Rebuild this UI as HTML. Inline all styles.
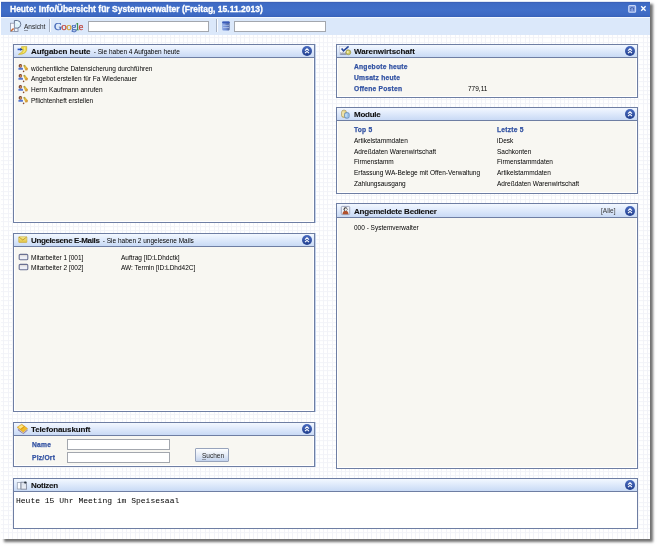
<!DOCTYPE html>
<html><head><meta charset="utf-8">
<style>
*{box-sizing:border-box;margin:0;padding:0}
html,body{width:659px;height:548px;overflow:hidden;background:#fff}
body{position:relative;font-family:"Liberation Sans",sans-serif;color:#000}
.abs{position:absolute}
.t65,.b71,.b77,.b85,.m8{position:absolute;white-space:nowrap;line-height:10px;will-change:transform}
.t65{font:6.5px/10px "Liberation Sans",sans-serif;color:#000}
.b71{font:bold 6.7px/10px "Liberation Sans",sans-serif;color:#3252a2;-webkit-text-stroke:0.25px #3252a2;letter-spacing:0.22px}
.b77{font:bold 8px/10px "Liberation Sans",sans-serif;color:#101010;-webkit-text-stroke:0.1px #101010}
.b77 .sub{margin-left:3.3px;font:normal 6.5px "Liberation Sans",sans-serif;color:#000;-webkit-text-stroke:0}
.b85{font:bold 8.5px/10px "Liberation Sans",sans-serif;color:#fff;-webkit-text-stroke:0.3px #fff}
.m8{font:8px/10px "Liberation Mono",monospace;color:#000}
.panel{position:absolute;border:1px solid #6e7ea3;box-shadow:inset 1px 1px 0 #fff,inset -1px -1px 0 #fff}
.hd{position:absolute;height:12px;background:linear-gradient(to bottom,#f3f8ff 0%,#e2ecfc 40%,#c9daf5 100%)}
.inp{position:absolute;background:#fff;border:1px solid #a3a7ae}
#wrap{position:absolute;left:0;top:0;width:659px;height:548px;filter:blur(0.3px)}
</style></head><body><div id="wrap">

<div class="abs" style="left:1px;top:1px;width:649px;height:538px;box-shadow:3px 3px 2.5px rgba(0,0,0,0.56)"></div>
<div class="abs" style="left:1px;top:1px;width:649px;height:538px;background-color:#fff;background-image:repeating-linear-gradient(to right,transparent 0,transparent 3.38px,#f2f3f8 3.38px,#f2f3f8 4.38px),repeating-linear-gradient(to bottom,transparent 0,transparent 3.38px,#f2f3f8 3.38px,#f2f3f8 4.38px);background-position:-1.04px -1.88px"></div>
<div class="abs" style="left:1px;top:1px;width:649px;height:1px;background:#dfe6f4"></div>
<div class="abs" style="left:1px;top:2px;width:649px;height:15px;background:linear-gradient(to bottom,#3858ac 0,#3e6ac4 1px,#416fc9 8px,#3d69c3 13px,#3760b8 15px)"></div>
<div class="abs" style="left:1px;top:17px;width:649px;height:1px;background:#f4f8fe"></div>
<div class="abs" style="left:1px;top:18px;width:649px;height:17px;background:#dbe8fa"></div>
<div class="b85" style="left:10px;top:4px;">Heute: Info/Übersicht für Systemverwalter (Freitag, 15.11.2013)</div>
<svg class="abs" style="left:626px;top:3px" width="22" height="12" viewBox="626 3 22 12"><rect x="628.7" y="5.5" width="6.9" height="6.7" rx="1" fill="#86a0e2" stroke="#c8d6f6" stroke-width="1.1"/><path d="M630.7 10.6 L630.7 7.7 L633.6 7.7 L633.6 10.6" fill="none" stroke="#1e3c86" stroke-width="0.75" stroke-dasharray="1 0.5"/><path d="M641.2 6.2 L645.6 10.8 M645.6 6.2 L641.2 10.8" stroke="#fff" stroke-width="1.3"/></svg>
<svg class="abs" style="left:9px;top:18px" width="14" height="16" viewBox="9 18 14 16"><rect x="14.4" y="27.6" width="3.6" height="3.8" fill="#eef3fa" stroke="#7a86a0" stroke-width="0.8"/><path d="M14.4 20.5 L17.4 20.5 Q20.9 20.8 20.8 24.3 Q20.7 27.8 17.4 28.1 L14.4 28.1 Z" fill="#def2fb" stroke="#5a6886" stroke-width="0.9"/><path d="M15.6 22 Q18.6 22 19 24" stroke="#ffffff" stroke-width="0.8" fill="none"/><rect x="10.5" y="23.2" width="3.8" height="8.2" fill="#f8f9fc" stroke="#8a93aa" stroke-width="0.8"/><path d="M11 31.1 L13.6 28.4" stroke="#c86830" stroke-width="1.5"/></svg>
<div class="t65" style="left:23.5px;top:22px;color:#222">Ansicht</div>
<div class="abs" style="left:23.5px;top:30px;width:4px;height:1px;background:#9098a8"></div>
<div class="abs" style="left:49px;top:19px;width:1px;height:13px;background:#a8b3c4"></div>
<div class="abs" style="left:50px;top:19px;width:1px;height:13px;background:#fafcff"></div>
<div class="abs" style="left:54px;top:20px;font:11px/12px 'Liberation Serif',serif;letter-spacing:-0.6px;white-space:nowrap;-webkit-text-stroke:0.25px"><span style="color:#3e62b4">G</span><span style="color:#c04a44">o</span><span style="color:#d2a030">o</span><span style="color:#3e62b4">g</span><span style="color:#3a8a48">l</span><span style="color:#c04a44">e</span></div>
<div class="inp" style="left:88px;top:21px;width:121px;height:11px"></div>
<div class="abs" style="left:216px;top:19px;width:1px;height:13px;background:#a8b3c4"></div>
<div class="abs" style="left:217px;top:19px;width:1px;height:13px;background:#fafcff"></div>
<svg class="abs" style="left:221px;top:20px" width="10" height="12" viewBox="221 20 10 12"><defs><linearGradient id="dbg" x1="0" x2="1"><stop offset="0" stop-color="#8aa4e0"/><stop offset="0.5" stop-color="#6e8cd6"/><stop offset="1" stop-color="#4a5e9a"/></linearGradient></defs><rect x="222.2" y="21.4" width="7.4" height="9" rx="0.8" fill="url(#dbg)"/><rect x="222.2" y="21.4" width="7.4" height="1.8" rx="0.6" fill="#3a5ab8"/><path d="M223 25.2 L229 25.2 M223 27.6 L229 27.6" stroke="#c8d6f4" stroke-width="0.7"/><path d="M225.5 24.2 L228.6 24.2" stroke="#4a5a88" stroke-width="0.6"/></svg>
<div class="inp" style="left:234px;top:21px;width:92px;height:11px"></div>
<div class="panel" style="left:13px;top:44px;width:302px;height:179px;background:#f8f7f2"></div>
<div class="hd" style="left:14px;top:45px;width:300px;height:12px"></div>
<div class="abs" style="left:14px;top:57px;width:300px;height:1px;background:#6e7ea3"></div>
<div class="abs" style="left:315px;top:44px;width:1px;height:179px;background:#c4d3ec"></div>
<svg class="abs" style="left:301px;top:45.0px" width="12" height="12" viewBox="0 0 12 12"><defs><linearGradient id="bg4413" x1="0" y1="0" x2="0" y2="1"><stop offset="0" stop-color="#4a6cc0"/><stop offset="1" stop-color="#223f8e"/></linearGradient></defs><circle cx="6" cy="6" r="5" fill="url(#bg4413)"/><path d="M4 5.6 L6 3.8 L8 5.6 M4 8.2 L6 6.4 L8 8.2" stroke="#fff" stroke-width="1.1" fill="none"/></svg>
<div class="b77" style="left:31px;top:47.0px;"><span style="letter-spacing:-0.07px">Aufgaben heute</span><span class="sub">- Sie haben 4 Aufgaben heute</span></div>
<div class="panel" style="left:13px;top:233px;width:302px;height:179px;background:#f8f7f2"></div>
<div class="hd" style="left:14px;top:234px;width:300px;height:12px"></div>
<div class="abs" style="left:14px;top:246px;width:300px;height:1px;background:#6e7ea3"></div>
<div class="abs" style="left:315px;top:233px;width:1px;height:179px;background:#c4d3ec"></div>
<svg class="abs" style="left:301px;top:234.0px" width="12" height="12" viewBox="0 0 12 12"><defs><linearGradient id="bg23313" x1="0" y1="0" x2="0" y2="1"><stop offset="0" stop-color="#4a6cc0"/><stop offset="1" stop-color="#223f8e"/></linearGradient></defs><circle cx="6" cy="6" r="5" fill="url(#bg23313)"/><path d="M4 5.6 L6 3.8 L8 5.6 M4 8.2 L6 6.4 L8 8.2" stroke="#fff" stroke-width="1.1" fill="none"/></svg>
<div class="b77" style="left:31px;top:236.0px;"><span style="letter-spacing:-0.37px">Ungelesene E-Mails</span><span class="sub">- Sie haben 2 ungelesene Mails</span></div>
<div class="panel" style="left:13px;top:422px;width:302px;height:45px;background:#f8f7f2"></div>
<div class="hd" style="left:14px;top:423px;width:300px;height:12px"></div>
<div class="abs" style="left:14px;top:435px;width:300px;height:1px;background:#6e7ea3"></div>
<div class="abs" style="left:315px;top:422px;width:1px;height:45px;background:#c4d3ec"></div>
<svg class="abs" style="left:301px;top:423.0px" width="12" height="12" viewBox="0 0 12 12"><defs><linearGradient id="bg42213" x1="0" y1="0" x2="0" y2="1"><stop offset="0" stop-color="#4a6cc0"/><stop offset="1" stop-color="#223f8e"/></linearGradient></defs><circle cx="6" cy="6" r="5" fill="url(#bg42213)"/><path d="M4 5.6 L6 3.8 L8 5.6 M4 8.2 L6 6.4 L8 8.2" stroke="#fff" stroke-width="1.1" fill="none"/></svg>
<div class="b77" style="left:31px;top:425.0px;"><span style="letter-spacing:-0.12px">Telefonauskunft</span></div>
<div class="panel" style="left:13px;top:478px;width:625px;height:51px;background:#fff"></div>
<div class="hd" style="left:14px;top:479px;width:623px;height:12px"></div>
<div class="abs" style="left:14px;top:491px;width:623px;height:1px;background:#6e7ea3"></div>
<svg class="abs" style="left:624px;top:479.0px" width="12" height="12" viewBox="0 0 12 12"><defs><linearGradient id="bg47813" x1="0" y1="0" x2="0" y2="1"><stop offset="0" stop-color="#4a6cc0"/><stop offset="1" stop-color="#223f8e"/></linearGradient></defs><circle cx="6" cy="6" r="5" fill="url(#bg47813)"/><path d="M4 5.6 L6 3.8 L8 5.6 M4 8.2 L6 6.4 L8 8.2" stroke="#fff" stroke-width="1.1" fill="none"/></svg>
<div class="b77" style="left:31px;top:481.0px;"><span style="letter-spacing:-0.3px">Notizen</span></div>
<div class="panel" style="left:336px;top:44px;width:302px;height:54px;background:#f8f7f2"></div>
<div class="hd" style="left:337px;top:45px;width:300px;height:12px"></div>
<div class="abs" style="left:337px;top:57px;width:300px;height:1px;background:#6e7ea3"></div>
<svg class="abs" style="left:624px;top:45.0px" width="12" height="12" viewBox="0 0 12 12"><defs><linearGradient id="bg44336" x1="0" y1="0" x2="0" y2="1"><stop offset="0" stop-color="#4a6cc0"/><stop offset="1" stop-color="#223f8e"/></linearGradient></defs><circle cx="6" cy="6" r="5" fill="url(#bg44336)"/><path d="M4 5.6 L6 3.8 L8 5.6 M4 8.2 L6 6.4 L8 8.2" stroke="#fff" stroke-width="1.1" fill="none"/></svg>
<div class="b77" style="left:353.5px;top:47.0px;"><span style="letter-spacing:-0.08px">Warenwirtschaft</span></div>
<div class="panel" style="left:336px;top:107px;width:302px;height:87px;background:#f8f7f2"></div>
<div class="hd" style="left:337px;top:108px;width:300px;height:12px"></div>
<div class="abs" style="left:337px;top:120px;width:300px;height:1px;background:#6e7ea3"></div>
<svg class="abs" style="left:624px;top:108.0px" width="12" height="12" viewBox="0 0 12 12"><defs><linearGradient id="bg107336" x1="0" y1="0" x2="0" y2="1"><stop offset="0" stop-color="#4a6cc0"/><stop offset="1" stop-color="#223f8e"/></linearGradient></defs><circle cx="6" cy="6" r="5" fill="url(#bg107336)"/><path d="M4 5.6 L6 3.8 L8 5.6 M4 8.2 L6 6.4 L8 8.2" stroke="#fff" stroke-width="1.1" fill="none"/></svg>
<div class="b77" style="left:353.5px;top:110.0px;"><span style="letter-spacing:-0.25px">Module</span></div>
<div class="panel" style="left:336px;top:203px;width:302px;height:266px;background:#f8f7f2"></div>
<div class="hd" style="left:337px;top:204px;width:300px;height:13px"></div>
<div class="abs" style="left:337px;top:217px;width:300px;height:1px;background:#6e7ea3"></div>
<svg class="abs" style="left:624px;top:204.5px" width="12" height="12" viewBox="0 0 12 12"><defs><linearGradient id="bg203336" x1="0" y1="0" x2="0" y2="1"><stop offset="0" stop-color="#4a6cc0"/><stop offset="1" stop-color="#223f8e"/></linearGradient></defs><circle cx="6" cy="6" r="5" fill="url(#bg203336)"/><path d="M4 5.6 L6 3.8 L8 5.6 M4 8.2 L6 6.4 L8 8.2" stroke="#fff" stroke-width="1.1" fill="none"/></svg>
<div class="b77" style="left:353.5px;top:206.5px;"><span style="letter-spacing:-0.2px">Angemeldete Bediener</span></div>
<div class="t65" style="left:31px;top:64px;">wöchentliche Datensicherung durchführen</div>
<svg class="abs" style="left:18px;top:64px" width="11" height="9" viewBox="0 0 11 9"><defs><linearGradient id="pg{b}" x1="0" y1="0" x2="1" y2="1"><stop offset="0" stop-color="#7a8a48"/><stop offset="0.45" stop-color="#e8c040"/><stop offset="1" stop-color="#c07a30"/></linearGradient></defs><circle cx="2.4" cy="1.9" r="1.8" fill="#6e3c2c"/><circle cx="2.7" cy="2.2" r="1.1" fill="#d08a50"/><rect x="0.4" y="3.8" width="4.6" height="2" rx="0.6" fill="#5676d0"/><path d="M5.2 1.6 L6.8 0.8 L10 4.6 L9.4 6.2 L7.4 6.4 Z" fill="url(#pg{b})"/><circle cx="5.6" cy="7.4" r="0.8" fill="#8a4a2a"/></svg>
<div class="t65" style="left:31px;top:74px;">Angebot erstellen für Fa Wiedenauer</div>
<svg class="abs" style="left:18px;top:74px" width="11" height="9" viewBox="0 0 11 9"><defs><linearGradient id="pg{b}" x1="0" y1="0" x2="1" y2="1"><stop offset="0" stop-color="#7a8a48"/><stop offset="0.45" stop-color="#e8c040"/><stop offset="1" stop-color="#c07a30"/></linearGradient></defs><circle cx="2.4" cy="1.9" r="1.8" fill="#6e3c2c"/><circle cx="2.7" cy="2.2" r="1.1" fill="#d08a50"/><rect x="0.4" y="3.8" width="4.6" height="2" rx="0.6" fill="#5676d0"/><path d="M5.2 1.6 L6.8 0.8 L10 4.6 L9.4 6.2 L7.4 6.4 Z" fill="url(#pg{b})"/><circle cx="5.6" cy="7.4" r="0.8" fill="#8a4a2a"/></svg>
<div class="t65" style="left:31px;top:85px;">Herrn Kaufmann anrufen</div>
<svg class="abs" style="left:18px;top:85px" width="11" height="9" viewBox="0 0 11 9"><defs><linearGradient id="pg{b}" x1="0" y1="0" x2="1" y2="1"><stop offset="0" stop-color="#7a8a48"/><stop offset="0.45" stop-color="#e8c040"/><stop offset="1" stop-color="#c07a30"/></linearGradient></defs><circle cx="2.4" cy="1.9" r="1.8" fill="#6e3c2c"/><circle cx="2.7" cy="2.2" r="1.1" fill="#d08a50"/><rect x="0.4" y="3.8" width="4.6" height="2" rx="0.6" fill="#5676d0"/><path d="M5.2 1.6 L6.8 0.8 L10 4.6 L9.4 6.2 L7.4 6.4 Z" fill="url(#pg{b})"/><circle cx="5.6" cy="7.4" r="0.8" fill="#8a4a2a"/></svg>
<div class="t65" style="left:31px;top:96px;">Pflichtenheft erstellen</div>
<svg class="abs" style="left:18px;top:96px" width="11" height="9" viewBox="0 0 11 9"><defs><linearGradient id="pg{b}" x1="0" y1="0" x2="1" y2="1"><stop offset="0" stop-color="#7a8a48"/><stop offset="0.45" stop-color="#e8c040"/><stop offset="1" stop-color="#c07a30"/></linearGradient></defs><circle cx="2.4" cy="1.9" r="1.8" fill="#6e3c2c"/><circle cx="2.7" cy="2.2" r="1.1" fill="#d08a50"/><rect x="0.4" y="3.8" width="4.6" height="2" rx="0.6" fill="#5676d0"/><path d="M5.2 1.6 L6.8 0.8 L10 4.6 L9.4 6.2 L7.4 6.4 Z" fill="url(#pg{b})"/><circle cx="5.6" cy="7.4" r="0.8" fill="#8a4a2a"/></svg>
<svg class="abs" style="left:16px;top:45px" width="12" height="11" viewBox="16 45 12 11"><path d="M21.5 46.6 L26.8 46.4 Q27.6 51.5 24.5 53.2 Q22 54.6 18.4 54.4 Q22.6 52.2 23.3 49.6 L21.2 49.7 Z" fill="#ecd84a" stroke="#b8a028" stroke-width="0.5"/><path d="M24.5 47.5 Q25.6 50.6 23.5 52.6" stroke="#f8f0a0" stroke-width="0.8" fill="none"/><path d="M17.6 49.4 L20.6 49.4" stroke="#2a58c8" stroke-width="1.6"/><path d="M20.2 48 L22.8 49.4 L20.2 50.8 Z" fill="#1a3c90"/></svg>
<svg class="abs" style="left:17px;top:235px" width="11" height="9" viewBox="17 235 11 9"><defs><linearGradient id="env" x1="0" y1="0" x2="0" y2="1"><stop offset="0" stop-color="#f8ec90"/><stop offset="1" stop-color="#e0c040"/></linearGradient></defs><rect x="18.7" y="236.7" width="8.2" height="5.8" rx="0.6" fill="url(#env)" stroke="#c0a030" stroke-width="0.5"/><path d="M18.9 237 L22.8 240 L26.7 237" stroke="#b08818" stroke-width="0.7" fill="none"/></svg>
<div class="t65" style="left:31px;top:253px;">Mitarbeiter 1 [001]</div>
<div class="t65" style="left:121px;top:253px;">Auftrag [ID:LDhdctk]</div>
<svg class="abs" style="left:18px;top:253px" width="11" height="8" viewBox="0 0 11 8"><rect x="1.2" y="1.4" width="8.6" height="5.4" rx="1.1" fill="#eef0f8" stroke="#6a7092" stroke-width="1.1"/><path d="M2.2 2.8 L8.8 2.8" stroke="#d8cfc0" stroke-width="0.7"/></svg>
<div class="t65" style="left:31px;top:263px;">Mitarbeiter 2 [002]</div>
<div class="t65" style="left:121px;top:263px;">AW: Termin [ID:LDhd42C]</div>
<svg class="abs" style="left:18px;top:263px" width="11" height="8" viewBox="0 0 11 8"><rect x="1.2" y="1.4" width="8.6" height="5.4" rx="1.1" fill="#eef0f8" stroke="#6a7092" stroke-width="1.1"/><path d="M2.2 2.8 L8.8 2.8" stroke="#d8cfc0" stroke-width="0.7"/></svg>
<svg class="abs" style="left:16px;top:423px" width="13" height="12" viewBox="16 423 13 12"><path d="M17.6 428.6 L18.2 430.6 L23.4 434 L27.6 430.6 L27.4 429 Z" fill="#8a7ca8"/><path d="M17.2 427.2 L21.8 424.2 L27.6 428.6 L23.2 432.6 Z" fill="#f0bc28" stroke="#c89020" stroke-width="0.5"/><path d="M18.4 427 L21.6 425 L23.6 426.6 L20.2 428.8 Z" fill="#fae68a"/><path d="M20.6 429.6 L24.6 426.4" stroke="#d88c10" stroke-width="0.9"/><path d="M17.8 428.4 L23.2 432.8 L27.6 429" stroke="#f8f0d8" stroke-width="0.6" fill="none"/></svg>
<div class="b71" style="left:31.5px;top:440px;">Name</div>
<div class="b71" style="left:31.5px;top:453px;">Plz/Ort</div>
<div class="inp" style="left:67px;top:439px;width:103px;height:11px"></div>
<div class="inp" style="left:67px;top:452px;width:103px;height:11px"></div>
<div class="abs" style="left:195px;top:448px;width:34px;height:14px;border:1px solid #98a4bc;border-radius:1px;background:linear-gradient(to bottom,#fdfeff 0%,#e8eef8 45%,#c4d4ee 100%)"></div>
<div class="t65" style="left:201.5px;top:451px;color:#222">Suchen</div>
<div class="abs" style="left:201.5px;top:459px;width:4px;height:1px;background:#9098a8"></div>
<svg class="abs" style="left:16px;top:480px" width="12" height="11" viewBox="16 480 12 11"><rect x="17.3" y="482.6" width="3.6" height="6.4" fill="#fafcff" stroke="#9aa2b4" stroke-width="0.8"/><rect x="21" y="482.2" width="5.6" height="7" fill="#dfe4ee" stroke="#7c8496" stroke-width="0.8"/><path d="M22 486 L25.6 486 M22 487.6 L25.6 487.6" stroke="#f4f6fa" stroke-width="0.6"/><circle cx="25.2" cy="482.6" r="1.1" fill="#2c3640"/></svg>
<div class="m8" style="left:15.5px;top:496px;">Heute 15 Uhr Meeting im Speisesaal</div>
<svg class="abs" style="left:338px;top:45px" width="14" height="11" viewBox="338 45 14 11"><rect x="339.6" y="46.6" width="7.6" height="7.6" fill="#f2f5fb" stroke="#c0c6d8" stroke-width="0.5"/><path d="M340.2 52.6 L346 52.6" stroke="#8a92aa" stroke-width="0.7" stroke-dasharray="1 0.6"/><path d="M340.2 54 L346.4 54" stroke="#4a5270" stroke-width="0.9"/><path d="M341.6 48.4 L343.5 50.8 L348.6 46.4" stroke="#2a4a9c" stroke-width="1.6" fill="none"/><circle cx="348.3" cy="52.3" r="2.5" fill="#cfc866" stroke="#7c7a34" stroke-width="0.5"/><circle cx="347.8" cy="51.9" r="1" fill="#f6f2c0"/></svg>
<div class="b71" style="left:354px;top:62px;">Angebote heute</div>
<div class="b71" style="left:354px;top:73px;">Umsatz heute</div>
<div class="b71" style="left:354px;top:84px;">Offene Posten</div>
<div class="t65" style="left:468px;top:84px;">779,11</div>
<svg class="abs" style="left:340px;top:109px" width="11" height="11" viewBox="340 109 11 11"><rect x="341.6" y="110.2" width="4.8" height="7.2" rx="2" fill="#e6d690" stroke="#a08c48" stroke-width="0.6"/><path d="M343 111.5 L343 116" stroke="#f8f0c8" stroke-width="0.9"/><rect x="344.6" y="112.6" width="4.6" height="5.6" rx="1.6" fill="#9cc4ec" stroke="#4a70a8" stroke-width="0.6"/><path d="M346 113.8 L346 116.8" stroke="#e0f0ff" stroke-width="0.9"/></svg>
<div class="b71" style="left:354px;top:125px;">Top 5</div>
<div class="b71" style="left:497px;top:125px;">Letzte 5</div>
<div class="t65" style="left:354px;top:136px;">Artikelstammdaten</div>
<div class="t65" style="left:497px;top:136px;">iDesk</div>
<div class="t65" style="left:354px;top:147px;">Adreßdaten Warenwirtschaft</div>
<div class="t65" style="left:497px;top:147px;">Sachkonten</div>
<div class="t65" style="left:354px;top:157px;">Firmenstamm</div>
<div class="t65" style="left:497px;top:157px;">Firmenstammdaten</div>
<div class="t65" style="left:354px;top:168px;">Erfassung WA-Belege mit Offen-Verwaltung</div>
<div class="t65" style="left:497px;top:168px;">Artikelstammdaten</div>
<div class="t65" style="left:354px;top:179px;">Zahlungsausgang</div>
<div class="t65" style="left:497px;top:179px;">Adreßdaten Warenwirtschaft</div>
<svg class="abs" style="left:340px;top:205px" width="11" height="11" viewBox="340 205 11 11"><rect x="341.3" y="206.4" width="8.4" height="8.2" rx="1" fill="#eef1f7" stroke="#8a92ab" stroke-width="0.8"/><path d="M342.4 214.2 Q342.8 210.8 345.5 210.8 Q348.2 210.8 348.6 214.2 Z" fill="#b0502c"/><circle cx="345.5" cy="209.2" r="1.9" fill="#303030"/><ellipse cx="345.8" cy="209.6" rx="1.2" ry="1.4" fill="#f6f0ea"/></svg>
<div class="t65" style="left:353.5px;top:223px;">000 - Systemverwalter</div>
<div class="t65" style="left:601px;top:206px;color:#333">[Alle]</div>
</div></body></html>
